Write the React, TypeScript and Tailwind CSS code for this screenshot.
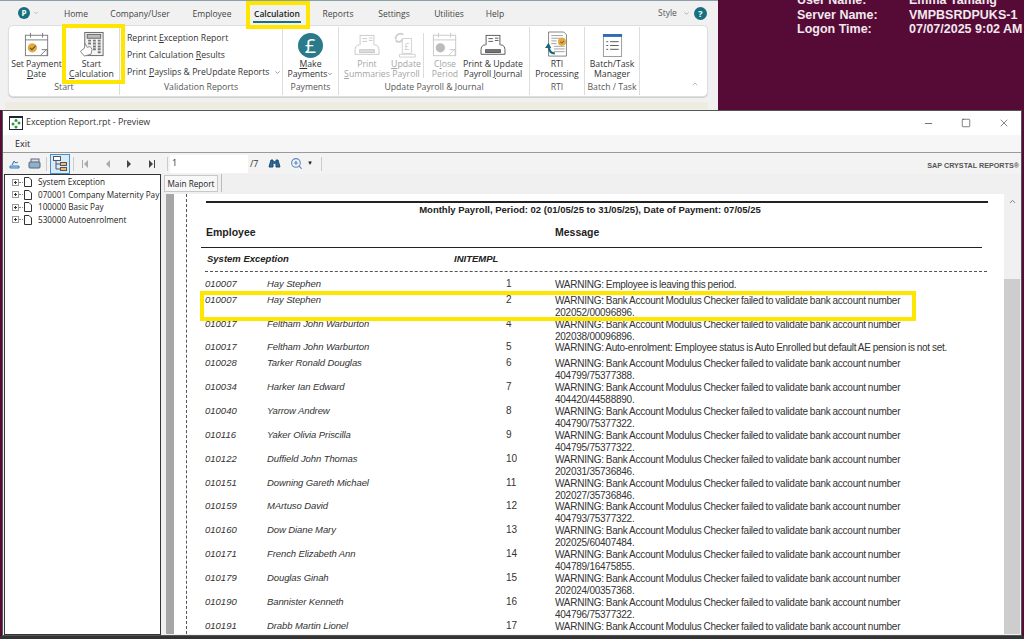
import React from 'react'
import { ChevronDown, ChevronUp, ZoomIn, Minus, Square, X } from 'lucide-react'

const ui = { fontFamily: '"Open Sans", "Noto Sans", sans-serif' }

const rows = [
  { id: '010007', name: 'Hay Stephen', no: '1', h: 'h-[16px]', msg: 'WARNING: Employee is leaving this period.' },
  { id: '010007', name: 'Hay Stephen', no: '2', h: 'h-[24px]', msg: 'WARNING:  Bank Account Modulus Checker failed to validate bank account number', acct: '202052/00096896.' },
  { id: '010017', name: 'Feltham John Warburton', no: '4', h: 'h-[23px]', msg: 'WARNING:  Bank Account Modulus Checker failed to validate bank account number', acct: '202038/00096896.' },
  { id: '010017', name: 'Feltham John Warburton', no: '5', h: 'h-[16px]', msg: 'WARNING: Auto-enrolment: Employee status is Auto Enrolled but default AE pension is not set.' },
  { id: '010028', name: 'Tarker Ronald Douglas', no: '6', h: 'h-[24px]', msg: 'WARNING:  Bank Account Modulus Checker failed to validate bank account number', acct: '404799/75377388.' },
  { id: '010034', name: 'Harker Ian Edward', no: '7', h: 'h-[24px]', msg: 'WARNING:  Bank Account Modulus Checker failed to validate bank account number', acct: '404420/44588890.' },
  { id: '010040', name: 'Yarrow Andrew', no: '8', h: 'h-[24px]', msg: 'WARNING:  Bank Account Modulus Checker failed to validate bank account number', acct: '404790/75377322.' },
  { id: '010116', name: 'Yaker Olivia Priscilla', no: '9', h: 'h-[24px]', msg: 'WARNING:  Bank Account Modulus Checker failed to validate bank account number', acct: '404795/75377322.' },
  { id: '010122', name: 'Duffield John Thomas', no: '10', h: 'h-[24px]', msg: 'WARNING:  Bank Account Modulus Checker failed to validate bank account number', acct: '202031/35736846.' },
  { id: '010151', name: 'Downing Gareth Michael', no: '11', h: 'h-[23px]', msg: 'WARNING:  Bank Account Modulus Checker failed to validate bank account number', acct: '202027/35736846.' },
  { id: '010159', name: 'MArtuso David', no: '12', h: 'h-[24px]', msg: 'WARNING:  Bank Account Modulus Checker failed to validate bank account number', acct: '404793/75377322.' },
  { id: '010160', name: 'Dow Diane Mary', no: '13', h: 'h-[24px]', msg: 'WARNING:  Bank Account Modulus Checker failed to validate bank account number', acct: '202025/60407484.' },
  { id: '010171', name: 'French Elizabeth Ann', no: '14', h: 'h-[24px]', msg: 'WARNING:  Bank Account Modulus Checker failed to validate bank account number', acct: '404789/16475855.' },
  { id: '010179', name: 'Douglas Ginah', no: '15', h: 'h-[24px]', msg: 'WARNING:  Bank Account Modulus Checker failed to validate bank account number', acct: '202024/00357368.' },
  { id: '010190', name: 'Bannister Kenneth', no: '16', h: 'h-[24px]', msg: 'WARNING:  Bank Account Modulus Checker failed to validate bank account number', acct: '404796/75377322.' },
  { id: '010191', name: 'Drabb Martin Lionel', no: '17', h: 'h-[24px]', msg: 'WARNING:  Bank Account Modulus Checker failed to validate bank account number', acct: '202029/35736846.' },
]

const tabs = [
  { label: 'Home', w: 'w-[58px]' },
  { label: 'Company/User', w: 'w-[70px]' },
  { label: 'Employee', w: 'w-[74px]' },
  { label: 'Calculation', w: 'w-[56px]', active: true },
  { label: 'Reports', w: 'w-[66px]' },
  { label: 'Settings', w: 'w-[46px]' },
  { label: 'Utilities', w: 'w-[64px]' },
  { label: 'Help', w: 'w-[28px]' },
]

const CalendarIcon = ({ grey }: { grey?: boolean }) => (
  <svg width="26" height="26" viewBox="0 0 28 28" fill="none" stroke={grey ? '#c8c8c8' : '#777'} strokeWidth="1">
    <rect x="1.5" y="3.5" width="24" height="22" fill="#fff" />
    <path d="M1.5 8.5h24M7 1v5M20 1v5" />
    <circle cx="9" cy="17" r="5" fill={grey ? '#bbb' : '#e3a93a'} stroke="none" />
    {!grey && <path d="M6.5 17l2 2 4-4" stroke="#555" strokeWidth="1.2" />}
    <path d="M18 25l7-7M19 19h6v6" />
  </svg>
)

const CalcIcon = () => (
  <svg width="26" height="27" viewBox="0 0 26 28" fill="none" stroke="#666" strokeWidth="1">
    <rect x="5.5" y="1.5" width="19" height="24" fill="#f4f4f4" />
    <rect x="8" y="3.5" width="14" height="4" fill="#bbb" />
    <path d="M9 10h3M14 10h3M19 10h3M9 13h3M14 13h3M19 13h3M14 16h3M19 16h3M14 19h3M19 19h3M19 22h3" strokeWidth="2" stroke="#777" />
    <path d="M1 21l4-3 1-5 2 4 3-1 2 3-1 5-7 2z" fill="#fff" stroke="#888" />
  </svg>
)

const PrinterIcon = ({ grey }: { grey?: boolean }) => (
  <svg width="26" height="24" viewBox="0 0 28 26" fill="none" stroke={grey ? '#c8c8c8' : '#555'} strokeWidth="1">
    <rect x="6.5" y="1.5" width="15" height="11" fill="#fff" />
    <path d="M9 5h5M9 8h5M16 4.500h4M16 7h4" />
    <path d="M6 12H4q-3 1-3 5v5h26v-5q0-4-3-5h-2" fill="#fff" />
    <rect x="6" y="17" width="16" height="3" fill={grey ? '#ddd' : '#777'} />
  </svg>
)

const UpdateIcon = () => (
  <svg width="26" height="26" viewBox="0 0 26 28" fill="none" stroke="#cfcfcf" strokeWidth="1">
    <path d="M9 7h10v16H9z" fill="#fff" />
    <path d="M6 24h17v3H6z" />
    <path d="M2 8a5 5 0 018-5M9 8a4 4 0 01-7 1" strokeWidth="2" />
    <text x="11" y="19" fontSize="10" fill="#ccc" stroke="none">£</text>
  </svg>
)

const RtiIcon = () => (
  <svg width="25" height="27" viewBox="0 0 28 30" fill="none">
    <path d="M4 1h17l3 3v24H4z" fill="#fff" stroke="#777" />
    <path d="M7 5h13M7 8h13M7 11h6M7 14h6M10 17h12M10 20h12M10 23h12" stroke="#999" />
    <circle cx="19" cy="12" r="4.500" fill="#e3a93a" />
    <path d="M17 12l2 1.500 2-2.500" stroke="#555" />
    <path d="M11 25Q5 25 4 17" stroke="#16687a" strokeWidth="2.500" />
    <path d="M0 19l4-6 3 6z" fill="#16687a" />
  </svg>
)

const BatchIcon = () => (
  <svg width="21" height="25" viewBox="0 0 22 26" fill="none">
    <rect x="1.500" y="1.500" width="19" height="23" fill="#fff" stroke="#999" />
    <rect x="1" y="1" width="20" height="3" fill="#2f6bb5" />
    <path d="M4.500 9h2M8.500 9h9M4.500 13h2M8.500 13h9M4.500 17h2M8.500 17h9" stroke="#555" />
  </svg>
)

function RibbonButton({ icon, lines, w, grey }: { icon: React.ReactNode; lines: React.ReactNode[]; w: string; grey?: boolean }) {
  return (
    <div className={`${w} flex flex-col items-center text-[8.700px] leading-[10px] ${grey ? 'text-[#a5a5a5]' : 'text-[#333]'}`}>
      <div className="h-[31px] flex items-end justify-center">{icon}</div>
      <div className="mt-px whitespace-nowrap">{lines[0]}</div>
      <div className="whitespace-nowrap">{lines[1]}</div>
    </div>
  )
}

function RibbonGroup({ label, w, children, cls = '' }: { label: string; w: string; children: React.ReactNode; cls?: string }) {
  return (
    <div className={`${w} h-[68px] flex flex-col border-r border-[#dcdcdc]`}>
      <div className={`flex h-[55px] ${cls}`}>{children}</div>
      <div className="text-center text-[8.700px] leading-[11px] text-[#555]">{label}</div>
    </div>
  )
}

function AppWindow() {
  return (
    <div className="absolute left-0 top-0 w-[718px] h-[110px] bg-[#f1f1f1] border-t border-[#8aa0a8]" style={ui}>
      <div className="flex items-center h-[24px]">
        <div className="w-[47px] flex items-center pl-[18px] gap-[3px]">
          <div className="w-[12px] h-[12px] rounded-full bg-[#17707f] text-white text-[8px] leading-[12px] text-center font-bold">P</div>
          <ChevronDown className="w-[6px] h-[6px] text-[#888]" />
        </div>
        <div className="flex flex-1 text-[8.500px] text-[#444] pt-[2px]">
          {tabs.map((t) => (
            <div key={t.label} className={`${t.w} flex justify-center whitespace-nowrap`}>
              <span className={t.active ? 'font-semibold text-[#222] border-b-2 border-[#17707f] px-px h-[17px] leading-[15px]' : 'h-[17px] leading-[15px]'}>{t.label}</span>
            </div>
          ))}
        </div>
        <div className="flex items-center w-[52px] text-[8.500px] text-[#555] mr-[8px]">
          <span>Style</span>
          <ChevronDown className="w-[7px] h-[7px] ml-[6px] text-[#888]" />
          <div className="ml-[4px] w-[13px] h-[13px] rounded-full bg-[#17707f] text-white text-[9px] leading-[13px] text-center font-bold">?</div>
        </div>
      </div>
      <div className="ml-[8px] w-[700px] h-[72px] bg-white rounded-[5px] border border-[#dedede] shadow-[0_1px_1px_rgba(0,0,0,0.15)] flex pt-px relative">
        <RibbonGroup label="Start" w="w-[111px]">
          <RibbonButton w="w-[55px]" icon={<CalendarIcon />} lines={['Set Payment', <span key="d"><u>D</u>ate</span>]} />
          <RibbonButton w="w-[55px]" icon={<CalcIcon />} lines={['Start', <span key="c"><u>C</u>alculation</span>]} />
        </RibbonGroup>
        <RibbonGroup label="Validation Reports" w="w-[163px]">
          <div className="pl-[7px] pt-[6px] flex flex-col gap-[6px] text-[8.700px] leading-[11px] text-[#333] whitespace-nowrap">
            <div>Reprint <u>E</u>xception Report</div>
            <div>Print Calculation <u>R</u>esults</div>
            <div className="flex items-center">Print <u className="ml-[2.500px]">P</u>ayslips &amp; PreUpdate Reports<ChevronDown className="w-[7px] h-[7px] ml-[5px] text-[#555]" /></div>
          </div>
        </RibbonGroup>
        <RibbonGroup label="Payments" w="w-[56px]">
          <div className="w-[55px] flex flex-col items-center text-[8.700px] leading-[10px] text-[#333]">
            <div className="h-[31px] flex items-end">
              <div className="w-[25px] h-[25px] rounded-full bg-[#2a7a8a] text-white text-[20px] leading-[25px] text-center">£</div>
            </div>
            <div className="mt-px"><u>M</u>ake</div>
            <div className="flex items-center">Payments<ChevronDown className="w-[6px] h-[6px]" /></div>
          </div>
        </RibbonGroup>
        <RibbonGroup label="Update Payroll &amp; Journal" w="w-[191px]" cls="pl-[6px]">
          <RibbonButton grey w="w-[44px]" icon={<PrinterIcon grey />} lines={['Print', <span key="s"><u>S</u>ummaries</span>]} />
          <RibbonButton grey w="w-[34px]" icon={<UpdateIcon />} lines={[<span key="u"><u>U</u>pdate</span>, 'Payroll']} />
          <div className="w-px h-[45px] mt-[6px] bg-[#dcdcdc]" />
          <RibbonButton grey w="w-[42px]" icon={<CalendarIcon grey />} lines={[<span key="c">C<u>l</u>ose</span>, 'Period']} />
          <RibbonButton w="w-[54px]" icon={<PrinterIcon />} lines={['Print & Update', <span key="p">Payroll <u>J</u>ournal</span>]} />
        </RibbonGroup>
        <RibbonGroup label="RTI" w="w-[55px]">
          <RibbonButton w="w-[54px]" icon={<RtiIcon />} lines={['RTI', 'Processing']} />
        </RibbonGroup>
        <RibbonGroup label="Batch / Task" w="w-[55px]">
          <RibbonButton w="w-[54px]" icon={<BatchIcon />} lines={['Batch/Task', 'Manager']} />
        </RibbonGroup>
        <ChevronUp className="absolute right-[8px] bottom-[8px] w-[8px] h-[8px] text-[#999]" />
      </div>
      <div className="ml-[5px] w-[703px] h-[7px] mt-[5px] bg-[#eeebe0]" />
    </div>
  )
}

const TreeItem = ({ label }: { label: string }) => (
  <div className="flex items-center h-[12.500px]">
    <div className="w-[7px] h-[7px] ml-[7px] border border-[#999] bg-white relative shrink-0">
      <div className="absolute left-[1px] top-[2px] w-[3px] h-px bg-[#333]" />
      <div className="absolute left-[2px] top-[1px] w-px h-[3px] bg-[#333]" />
    </div>
    <div className="w-[4px] border-t border-dotted border-[#888] shrink-0" />
    <svg width="8" height="10" viewBox="0 0 8 10" fill="white" stroke="#333" strokeWidth="1" className="ml-px shrink-0">
      <path d="M.5.500h4.500l2.500 2.500v6.500h-7z" />
    </svg>
    <span className="ml-[6px] whitespace-nowrap">{label}</span>
  </div>
)

function ToolIcon({ children }: { children: React.ReactNode }) {
  return <div className="w-[20px] flex justify-center">{children}</div>
}

function NavIcon({ dir, bar, on }: { dir: 'l' | 'r'; bar?: boolean; on?: boolean }) {
  const c = on ? '#444' : '#aaa'
  return (
    <svg width="7" height="8" viewBox="0 0 7 8" className="mx-[7.500px]">
      <path d={dir === 'l' ? 'M6 0v8L2 4z' : 'M1 0v8l4-4z'} fill={c} />
      {bar && <rect x={dir === 'l' ? 0 : 6} y="0" width="1" height="8" fill={c} />}
    </svg>
  )
}

function PreviewWindow() {
  return (
    <div className="absolute left-[2px] top-[110px] right-[2px] h-[526px] bg-[#f0f0f0] border border-[#555] flex flex-col" style={ui}>
      <div className="h-[24px] bg-white flex items-center text-[#333] shrink-0">
        <svg width="14" height="14" viewBox="0 0 14 14" className="ml-[6px]">
          <rect x=".5" y=".5" width="13" height="13" fill="#fff" stroke="#223" />
          <rect x="0" y="0" width="14" height="2" fill="#223" />
          <circle cx="7" cy="4.500" r="1.500" fill="#2a9a3a" />
          <circle cx="4" cy="8" r="1.500" fill="#2a9a3a" />
          <circle cx="10" cy="7" r="1.500" fill="#2a9a3a" />
          <circle cx="7" cy="11" r="1.500" fill="#2a9a3a" />
        </svg>
        <span className="ml-[3px] text-[8.800px]">Exception Report.rpt - Preview</span>
        <div className="ml-auto flex items-center gap-[27px] mr-[11px]">
          <Minus className="w-[11px] h-[11px]" strokeWidth={1.500} />
          <Square className="w-[10px] h-[10px]" strokeWidth={1.500} />
          <X className="w-[12px] h-[12px]" strokeWidth={1.200} />
        </div>
      </div>
      <div className="h-[18px] bg-[#f6f6f6] border-b border-[#9a9a9a] text-[9px] leading-[17px] pl-[12px] text-[#222] shrink-0">Exit</div>
      <div className="h-[21px] bg-[#f3f3f3] flex items-center shrink-0 relative pl-px">
        <ToolIcon><svg width="11" height="10" viewBox="0 0 11 10"><path d="M1 9h9V7H1zM3 6l2-4 2 2 2-1" fill="#bcd3ea" stroke="#3a78b8" /></svg></ToolIcon>
        <ToolIcon><svg width="13" height="12" viewBox="0 0 13 12"><rect x="3" y="1" width="8" height="4" fill="#ddd" stroke="#668" /><rect x="1" y="4" width="11" height="6" rx="1" fill="#8fb0cc" stroke="#567" /></svg></ToolIcon>
        <div className="w-px h-[14px] bg-[#ccc] mx-[2px]" />
        <div className="w-[20px] h-[20px] ml-px bg-[#d9ebf8] border border-[#4a90c8] flex items-center justify-center">
          <svg width="14" height="16" viewBox="0 0 14 16" fill="none"><rect x=".5" y=".5" width="7" height="4" fill="#fff" stroke="#556" /><rect x="7.500" y="6.500" width="6" height="3" fill="#f0c060" stroke="#556" /><rect x="7.500" y="11.500" width="6" height="3" fill="#f0c060" stroke="#556" /><path d="M3 5v8h4M3 8h4" stroke="#556" /></svg>
        </div>
        <div className="w-px h-[14px] bg-[#ccc] mx-[3px]" />
        <div className="flex items-center w-[91px] -ml-[3px]">
          <NavIcon dir="l" bar />
          <NavIcon dir="l" />
          <NavIcon dir="r" on />
          <NavIcon dir="r" bar on />
        </div>
        <div className="w-px h-[14px] bg-[#ccc] mx-[2px]" />
        <div className="w-[78px] h-[18px] bg-white text-[9px] leading-[16px] pl-[2px] text-[#333]">1</div>
        <span className="text-[9px] text-[#333] ml-[2px] w-[16px]">/7</span>
        <svg width="13" height="11" viewBox="0 0 13 11" className="ml-[2px]"><path d="M1 9l2-7h2v7zM8 9V2h2l2 7z" fill="#2f6a9a" stroke="#1f4a70" /><rect x="5" y="3" width="3" height="3" fill="#2f6a9a" /></svg>
        <ZoomIn className="w-[13px] h-[13px] ml-[9px] text-[#5a8ac0]" />
        <span className="text-[6px] text-[#222] ml-[4px]">▼</span>
        <div className="w-px h-[14px] bg-[#ccc] ml-[8px]" />
        <span className="absolute right-[2px] top-[8px] text-[7.200px] font-bold text-[#555]" style={{ fontFamily: '"Liberation Sans", sans-serif' }}>SAP CRYSTAL REPORTS®</span>
      </div>
      <div className="flex flex-1 min-h-0 bg-[#f0f0f0]">
        <div className="w-[157px] shrink-0 bg-white border border-[#333] ml-px pt-px text-[8.200px] text-[#222] overflow-hidden">
          <TreeItem label="System Exception" />
          <TreeItem label="070001 Company Maternity Pay" />
          <TreeItem label="100000 Basic Pay" />
          <TreeItem label="530000 Autoenrolment" />
        </div>
        <div className="flex-1 min-w-0 flex flex-col pl-[3px]">
          <div className="h-[20px] shrink-0 flex">
            <div className="w-[54px] h-[17px] mt-px bg-[#f7f7f7] border border-[#c8c8c8] text-[8.200px] leading-[15px] text-center text-[#222]">Main Report</div>
            <div className="w-px h-[18px] bg-[#bbb] ml-[3px]" />
          </div>
          <div className="flex-1 min-h-0 flex pl-[2px] pb-px">
            <div className="w-[8px] bg-[#a6a6a6] shrink-0" />
            <Report />
            <div className="w-[16px] shrink-0 flex flex-col">
              <div className="h-[85px] bg-[#f0f0f0] flex justify-center pt-[3px]"><ChevronUp className="w-[9px] h-[9px] text-[#555]" /></div>
              <div className="flex-1 bg-[#cdcdcd]" />
            </div>
            <div className="w-px bg-[#f0f0f0] shrink-0" />
          </div>
        </div>
      </div>
    </div>
  )
}

function Report() {
  return (
    <div className="flex-1 min-w-0 bg-white relative overflow-hidden text-[#333]" style={{ fontFamily: '"Liberation Sans", sans-serif' }}>
      <div className="absolute left-[12px] top-0 bottom-0 border-l border-dashed border-[#555]" />
      <div className="ml-[32px] mt-[7px] w-[782px] border-t-2 border-[#222]" />
      <div className="text-center text-[9.500px] leading-[12px] font-bold text-[#222] ml-[27px] w-[778px] mt-px">Monthly Payroll, Period: 02 (01/05/25 to 31/05/25), Date of Payment: 07/05/25</div>
      <div className="flex text-[10.500px] leading-[14px] font-bold text-[#222] ml-[32px] mt-[9px]">
        <div className="w-[349px]">Employee</div>
        <div>Message</div>
      </div>
      <div className="ml-[27px] w-[781px] border-t border-[#222] mt-[8px]" />
      <div className="flex text-[9.500px] leading-[12px] font-bold italic text-[#222] ml-[33px] mt-[5px]">
        <div className="w-[247px]">System Exception</div>
        <div>INITEMPL</div>
      </div>
      <div className="ml-[31px] w-[782px] border-t border-dashed border-[#555] mt-[6px]" />
      <div className="mt-[6px]">
        {rows.map((r, i) => (
          <div key={i} className={`${r.h} flex ml-[31px] text-[9.500px] leading-[12px] whitespace-nowrap`}>
            <div className="w-[62px] italic">{r.id}</div>
            <div className="w-[210px] italic tracking-[-0.1px]">{r.name}</div>
            <div className="w-[78px] text-[10px] pl-[29px]">{r.no}</div>
            <div className="text-[10px] tracking-[-0.25px] [word-spacing:-0.5px] pt-px">
              <div>{r.msg}</div>
              {r.acct && <div>{r.acct}</div>}
            </div>
          </div>
        ))}
      </div>
    </div>
  )
}

export default function App() {
  return (
    <div className="relative w-[1024px] h-[639px] overflow-hidden bg-[#560a36]">
      <AppWindow />
      <div className="absolute left-[797px] top-[-7px] grid grid-cols-[112px_1fr] text-[12.500px] leading-[14.500px] font-bold text-[#f2e8ee]" style={{ fontFamily: '"Liberation Sans", sans-serif' }}>
        <div>User Name:</div><div>Emma Tamang</div>
        <div>Server Name:</div><div>VMPBSRDPUKS-1</div>
        <div>Logon Time:</div><div>07/07/2025 9:02 AM</div>
      </div>
      <PreviewWindow />
      <div className="absolute left-0 right-0 bottom-0 h-[3px] bg-[#333]" />
      {/* yellow call-outs */}
      <div className="absolute left-[246px] top-px w-[64px] h-[28px] border-4 border-[#ffe600]" />
      <div className="absolute left-[62px] top-[24px] w-[63px] h-[60px] border-4 border-[#ffe600]" />
      <div className="absolute left-[200px] top-[291px] w-[716px] h-[30px] border-4 border-[#ffe600]" />
    </div>
  )
}
